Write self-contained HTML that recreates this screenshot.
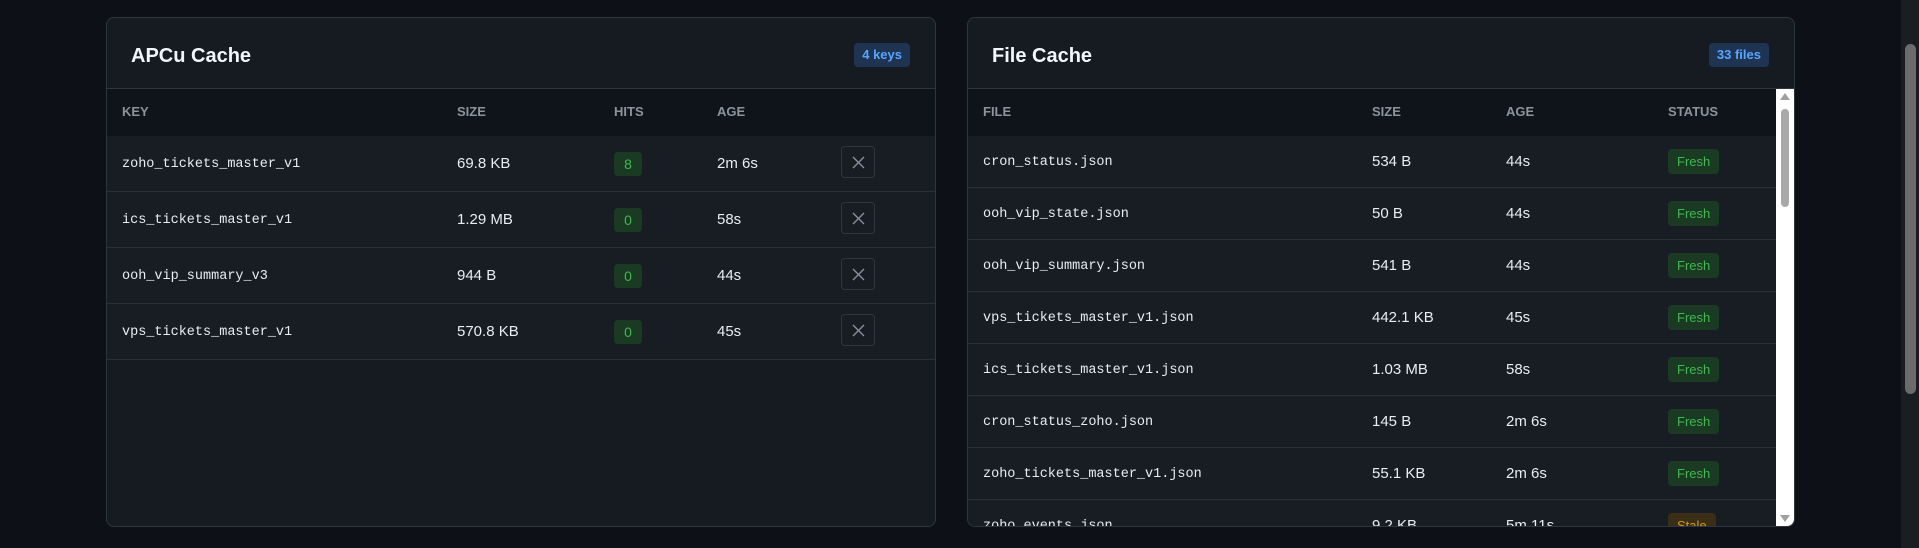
<!DOCTYPE html>
<html><head><style>
*{box-sizing:border-box;margin:0;padding:0}
body{width:1919px;height:548px;background:#0d1117;overflow:hidden;font-family:"Liberation Sans",sans-serif;color:#e6edf3;position:relative}
.panel{position:absolute;top:17px;height:510px;background:#161b22;border:1px solid #30363d;border-radius:8px;overflow:hidden}
.hdr{height:71px;border-bottom:1px solid #30363d;position:relative}
.hdr h2{position:absolute;left:24px;top:27px;font-size:20px;font-weight:bold;color:#f0f6fc}
.badge{position:absolute;top:25px;height:24px;line-height:24px;padding:0 8px;border-radius:4px;background:#1f3352;color:#58a6ff;font-size:13px;font-weight:bold}
.th{position:absolute;top:71px;left:0;right:0;height:47px;background:#0f141a}
.th span{position:absolute;top:15px;font-size:13px;font-weight:bold;color:#8b949e}
.row{position:absolute;left:0;right:0;border-bottom:1px solid #2a3038;background:#181d24}
.row span{position:absolute;font-size:15px;color:#e6edf3}
.row .m{font-family:"Liberation Mono",monospace;font-size:13.5px}
.hit{background:#1b3a24;color:#3fb950 !important;width:28px;height:24px;border-radius:4px;text-align:center;line-height:24px;font-size:14px !important}
.x{width:34px;height:32px;border:1px solid #30363d;border-radius:4px}
.x svg{position:absolute;left:10px;top:9px}
.st{background:#1b3a24;color:#3fb950 !important;height:25px;line-height:25px;padding:0 9px;border-radius:4px;font-size:13px !important}
.stale{background:#3a2f16;color:#d29922 !important}
</style></head><body>
<div class="panel" style="left:106px;width:830px">
 <div class="hdr"><h2>APCu Cache</h2><div class="badge" style="right:25px">4 keys</div></div>
 <div class="th"><span style="left:15px">KEY</span><span style="left:350px">SIZE</span><span style="left:507px">HITS</span><span style="left:610px">AGE</span></div>
 <div class="row" style="top:118px;height:56px"><span class="m" style="left:15px;top:21px">zoho_tickets_master_v1</span><span style="left:350px;top:19px">69.8 KB</span><span class="hit" style="left:507px;top:16px">8</span><span style="left:610px;top:19px">2m 6s</span><span class="x" style="left:734px;top:10px"><svg width="13" height="13"><path d="M1 1L12 12M12 1L1 12" stroke="#8b949e" stroke-width="1.3"/></svg></span></div>
 <div class="row" style="top:174px;height:56px"><span class="m" style="left:15px;top:21px">ics_tickets_master_v1</span><span style="left:350px;top:19px">1.29 MB</span><span class="hit" style="left:507px;top:16px">0</span><span style="left:610px;top:19px">58s</span><span class="x" style="left:734px;top:10px"><svg width="13" height="13"><path d="M1 1L12 12M12 1L1 12" stroke="#8b949e" stroke-width="1.3"/></svg></span></div>
 <div class="row" style="top:230px;height:56px"><span class="m" style="left:15px;top:21px">ooh_vip_summary_v3</span><span style="left:350px;top:19px">944 B</span><span class="hit" style="left:507px;top:16px">0</span><span style="left:610px;top:19px">44s</span><span class="x" style="left:734px;top:10px"><svg width="13" height="13"><path d="M1 1L12 12M12 1L1 12" stroke="#8b949e" stroke-width="1.3"/></svg></span></div>
 <div class="row" style="top:286px;height:56px"><span class="m" style="left:15px;top:21px">vps_tickets_master_v1</span><span style="left:350px;top:19px">570.8 KB</span><span class="hit" style="left:507px;top:16px">0</span><span style="left:610px;top:19px">45s</span><span class="x" style="left:734px;top:10px"><svg width="13" height="13"><path d="M1 1L12 12M12 1L1 12" stroke="#8b949e" stroke-width="1.3"/></svg></span></div>
</div>
<div class="panel" style="left:967px;width:828px">
 <div class="hdr"><h2>File Cache</h2><div class="badge" style="right:25px">33 files</div></div>
 <div style="position:absolute;top:71px;left:0;right:18px;bottom:0;overflow:hidden">
  <div class="th" style="top:0"><span style="left:15px">FILE</span><span style="left:404px">SIZE</span><span style="left:538px">AGE</span><span style="left:700px">STATUS</span></div>
  <div style="position:absolute;top:47px;left:0;right:0">
   <div class="row" style="top:0;height:52px"><span class="m" style="left:15px;top:19px">cron_status.json</span><span style="left:404px;top:17px">534 B</span><span style="left:538px;top:17px">44s</span><span class="st" style="left:700px;top:13px">Fresh</span></div>
   <div class="row" style="top:52px;height:52px"><span class="m" style="left:15px;top:19px">ooh_vip_state.json</span><span style="left:404px;top:17px">50 B</span><span style="left:538px;top:17px">44s</span><span class="st" style="left:700px;top:13px">Fresh</span></div>
   <div class="row" style="top:104px;height:52px"><span class="m" style="left:15px;top:19px">ooh_vip_summary.json</span><span style="left:404px;top:17px">541 B</span><span style="left:538px;top:17px">44s</span><span class="st" style="left:700px;top:13px">Fresh</span></div>
   <div class="row" style="top:156px;height:52px"><span class="m" style="left:15px;top:19px">vps_tickets_master_v1.json</span><span style="left:404px;top:17px">442.1 KB</span><span style="left:538px;top:17px">45s</span><span class="st" style="left:700px;top:13px">Fresh</span></div>
   <div class="row" style="top:208px;height:52px"><span class="m" style="left:15px;top:19px">ics_tickets_master_v1.json</span><span style="left:404px;top:17px">1.03 MB</span><span style="left:538px;top:17px">58s</span><span class="st" style="left:700px;top:13px">Fresh</span></div>
   <div class="row" style="top:260px;height:52px"><span class="m" style="left:15px;top:19px">cron_status_zoho.json</span><span style="left:404px;top:17px">145 B</span><span style="left:538px;top:17px">2m 6s</span><span class="st" style="left:700px;top:13px">Fresh</span></div>
   <div class="row" style="top:312px;height:52px"><span class="m" style="left:15px;top:19px">zoho_tickets_master_v1.json</span><span style="left:404px;top:17px">55.1 KB</span><span style="left:538px;top:17px">2m 6s</span><span class="st" style="left:700px;top:13px">Fresh</span></div>
   <div class="row" style="top:364px;height:52px"><span class="m" style="left:15px;top:19px">zoho_events.json</span><span style="left:404px;top:17px">9.2 KB</span><span style="left:538px;top:17px">5m 11s</span><span class="st stale" style="left:700px;top:13px">Stale</span></div>
  </div>
 </div>
 <div style="position:absolute;top:71px;right:0;width:18px;bottom:0;background:#fff">
  <div style="position:absolute;top:4px;left:4px;width:0;height:0;border-left:5px solid transparent;border-right:5px solid transparent;border-bottom:7px solid #a0a0a0"></div>
  <div style="position:absolute;top:20px;left:5px;width:8px;height:98px;border-radius:4px;background:#a8a8a8"></div>
  <div style="position:absolute;bottom:4px;left:4px;width:0;height:0;border-left:5px solid transparent;border-right:5px solid transparent;border-top:7px solid #a0a0a0"></div>
 </div>
</div>
<div style="position:absolute;right:0;top:0;width:18px;height:548px;background:#1a1d21"></div>
<div style="position:absolute;right:3px;top:44px;width:11px;height:350px;border-radius:6px;background:#6b6b6b"></div>
</body></html>
